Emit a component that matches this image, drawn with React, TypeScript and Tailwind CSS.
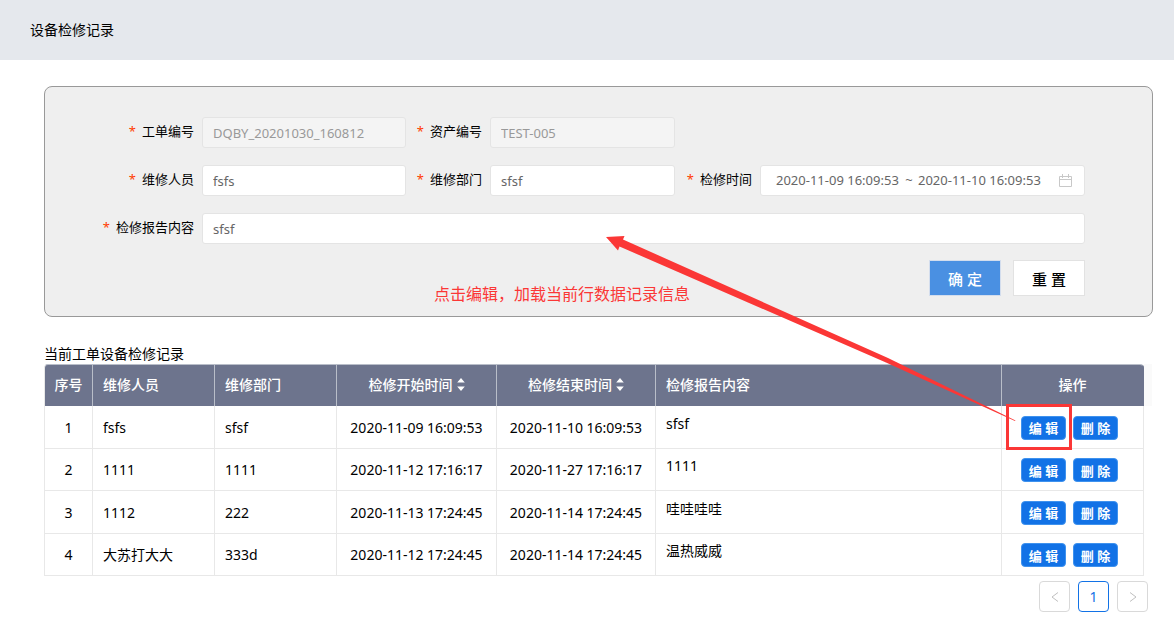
import { useState } from "react";
import type { ReactNode } from "react";

type RepairRecord = {
  id: number;
  person: string;
  dept: string;
  start: string;
  end: string;
  report: string;
};

const records: RepairRecord[] = [
  { id: 1, person: "fsfs", dept: "sfsf", start: "2020-11-09 16:09:53", end: "2020-11-10 16:09:53", report: "sfsf" },
  { id: 2, person: "1111", dept: "1111", start: "2020-11-12 17:16:17", end: "2020-11-27 17:16:17", report: "1111" },
  { id: 3, person: "1112", dept: "222", start: "2020-11-13 17:24:45", end: "2020-11-14 17:24:45", report: "哇哇哇哇" },
  { id: 4, person: "大苏打大大", dept: "333d", start: "2020-11-12 17:24:45", end: "2020-11-14 17:24:45", report: "温热威威" },
];

const inputClass =
  "h-[31px] w-full min-w-0 rounded-[3px] border border-[#e4e4e4] bg-white px-2.5 text-[13px] text-[#666] outline-none disabled:bg-[#f4f4f4] disabled:text-[#999]";

function FieldLabel({ htmlFor, children }: { htmlFor: string; children: ReactNode }) {
  return (
    <label
      htmlFor={htmlFor}
      className="flex items-center justify-end gap-1.5 pr-2 pb-0.5 text-[13px] whitespace-nowrap first:col-start-1"
    >
      <span className="text-[#ff3c00]">*</span>
      {children}
    </label>
  );
}

function CalendarIcon() {
  return (
    <svg viewBox="0 0 13 13" className="size-[13px] shrink-0" fill="none" stroke="#c8c8c8" aria-hidden="true">
      <path d="M.5 2.5h12v10H.5zM.5 5.5h12M3.5 0v4M9.5 0v4" />
    </svg>
  );
}

function SortIcon() {
  return (
    <svg viewBox="0 0 8 13" className="h-[13px] w-2" fill="currentColor" aria-hidden="true">
      <path d="M4 0 7.8 4.5H.2zM4 13 .2 8.5h7.6z" />
    </svg>
  );
}

function SortHead({ children }: { children: ReactNode }) {
  return (
    <button type="button" className="inline-flex items-center gap-1 font-medium">
      {children}
      <SortIcon />
    </button>
  );
}

function RowButton({ children }: { children: ReactNode }) {
  return (
    <button
      type="button"
      className="h-6 w-[45px] rounded border border-[#3f92ee] bg-[#1272e6] pt-px text-[13px] leading-5 font-bold text-white"
    >
      {children}
    </button>
  );
}

const headCell = "border-t border-r border-[#b9bec9] bg-[#6d748d] pt-0 pr-0 pb-[3px] font-medium";
const cell = "border-r border-b border-[#e8e8e8]";
const pageButton = "flex h-[31px] w-[31px] items-center justify-center rounded border";

export default function App() {
  const [person, setPerson] = useState("fsfs");
  const [dept, setDept] = useState("sfsf");
  const [report, setReport] = useState("sfsf");
  const [from, setFrom] = useState("2020-11-09 16:09:53");
  const [to, setTo] = useState("2020-11-10 16:09:53");

  return (
    <div className="relative min-h-screen bg-white font-['Noto_Sans','Noto_Sans_CJK_SC',sans-serif] text-[14px] text-black">
      <header className="flex h-15 items-center bg-[#e5e8ed] px-[30px] pb-0.5">
        <h1>设备检修记录</h1>
      </header>

      <main>
        <form
          onSubmit={(e) => e.preventDefault()}
          className="relative mt-[26px] mr-[21px] ml-11 rounded-lg border border-[#999] bg-[#efefef] pt-[30px] pr-[67px] pb-5"
        >
          <div className="grid grid-cols-[157px_204fr_84px_185fr_85px_325fr] gap-y-[17px]">
            <FieldLabel htmlFor="order">工单编号</FieldLabel>
            <input id="order" className={inputClass} value="DQBY_20201030_160812" disabled />
            <FieldLabel htmlFor="asset">资产编号</FieldLabel>
            <input id="asset" className={`${inputClass} col-span-3 max-w-[185px]`} value="TEST-005" disabled />

            <FieldLabel htmlFor="person">维修人员</FieldLabel>
            <input id="person" className={inputClass} value={person} onChange={(e) => setPerson(e.target.value)} />
            <FieldLabel htmlFor="dept">维修部门</FieldLabel>
            <input id="dept" className={inputClass} value={dept} onChange={(e) => setDept(e.target.value)} />
            <FieldLabel htmlFor="from">检修时间</FieldLabel>
            <div className="flex h-[31px] min-w-0 items-center rounded-[3px] border border-[#e4e4e4] bg-white pr-3 pl-[15px] text-[13px] text-[#666]">
              <input
                id="from"
                className="w-[124px] min-w-0 outline-none"
                value={from}
                onChange={(e) => setFrom(e.target.value)}
              />
              <span className="w-[18px] text-center">~</span>
              <input
                aria-label="检修结束时间"
                className="w-[124px] min-w-0 outline-none"
                value={to}
                onChange={(e) => setTo(e.target.value)}
              />
              <span className="ml-auto">
                <CalendarIcon />
              </span>
            </div>

            <FieldLabel htmlFor="report">检修报告内容</FieldLabel>
            <input
              id="report"
              className={`${inputClass} col-span-5`}
              value={report}
              onChange={(e) => setReport(e.target.value)}
            />
          </div>

          <div className="mt-4 flex justify-end gap-3 text-[15px]">
            <button
              type="submit"
              className="h-9 w-[72px] border border-[#d3dded] bg-[#4a90e2] pt-0.5 font-medium text-white"
            >
              确 定
            </button>
            <button type="reset" className="h-9 w-[72px] border border-[#e2e2e2] bg-white pt-0.5 font-medium text-black">
              重 置
            </button>
          </div>

          <p className="absolute top-[195px] left-[389px] text-[16px] leading-6 text-[#fb3736]">
            点击编辑，加载当前行数据记录信息
          </p>
        </form>

        <section className="mt-[27px] mr-[22px] ml-11">
          <h2 className="leading-5">当前工单设备检修记录</h2>
          <div className="bg-linear-to-b from-[#fafafa] from-[42px] to-white to-[42px] pr-2">
            <table className="w-full table-fixed border-separate border-spacing-0 bg-white">
              <colgroup>
                <col className="w-[49px]" />
                <col className="w-[122px]" />
                <col className="w-[122px]" />
                <col className="w-[160px]" />
                <col className="w-[159px]" />
                <col />
                <col className="w-[142px]" />
              </colgroup>
              <thead>
                <tr className="h-[42px] text-white">
                  <th className={`${headCell} rounded-tl border-l border-l-[#e8e8e8] pl-0 text-center`}>序号</th>
                  <th className={`${headCell} pl-2.5 text-left`}>维修人员</th>
                  <th className={`${headCell} pl-2.5 text-left`}>维修部门</th>
                  <th className={`${headCell} pl-0 text-center`}>
                    <SortHead>检修开始时间</SortHead>
                  </th>
                  <th className={`${headCell} pl-0 text-center`}>
                    <SortHead>检修结束时间</SortHead>
                  </th>
                  <th className={`${headCell} pl-2.5 text-left`}>检修报告内容</th>
                  <th className={`${headCell} rounded-tr border-r-[#6d748d] pl-0 text-center`}>操作</th>
                </tr>
              </thead>
              <tbody>
                {records.map((r) => (
                  <tr key={r.id} className="h-[42px] odd:h-[43px]">
                    <td className={`${cell} border-l p-0 text-center`}>{r.id}</td>
                    <td className={`${cell} px-2.5 py-0`}>{r.person}</td>
                    <td className={`${cell} px-2.5 py-0`}>{r.dept}</td>
                    <td className={`${cell} p-0 text-center`}>{r.start}</td>
                    <td className={`${cell} p-0 text-center`}>{r.end}</td>
                    <td className={`${cell} px-2.5 pt-0 pb-2`}>{r.report}</td>
                    <td className={`${cell} p-0`}>
                      <div className="flex justify-center gap-[7px] pt-px pr-1.5">
                        <RowButton>编 辑</RowButton>
                        <RowButton>删 除</RowButton>
                      </div>
                    </td>
                  </tr>
                ))}
              </tbody>
            </table>
          </div>
        </section>

        <nav className="mt-[5px] mr-[26px] flex justify-end gap-2" aria-label="分页">
          <button type="button" aria-label="上一页" className={`${pageButton} border-[#d9d9d9] text-[#bfbfbf]`}>
            <svg viewBox="0 0 8 10" className="h-2.5 w-2" fill="none" stroke="currentColor" aria-hidden="true">
              <path d="M7 .5 1 5l6 4.5" />
            </svg>
          </button>
          <button type="button" aria-current="page" className={`${pageButton} border-[#1272e6] text-[#1272e6]`}>
            1
          </button>
          <button type="button" aria-label="下一页" className={`${pageButton} border-[#d9d9d9] text-[#bfbfbf]`}>
            <svg viewBox="0 0 8 10" className="h-2.5 w-2" fill="none" stroke="currentColor" aria-hidden="true">
              <path d="M1 .5 7 5 1 9.5" />
            </svg>
          </button>
        </nav>
      </main>

      <svg
        viewBox="606 230 412 200"
        className="pointer-events-none absolute top-[230px] left-[606px] h-[200px] w-[412px]"
        fill="#fb3736"
        aria-hidden="true"
      >
        <path d="M606 237 624.500 236 623 239.500 888 358 1015.500 420.500 1015 421 886 362.500 619.500 246.500 618 250.500z" />
      </svg>
      <div className="pointer-events-none absolute top-[404px] left-[1006px] h-[46px] w-[66px] border-3 border-[#fb3736]" />
    </div>
  );
}
